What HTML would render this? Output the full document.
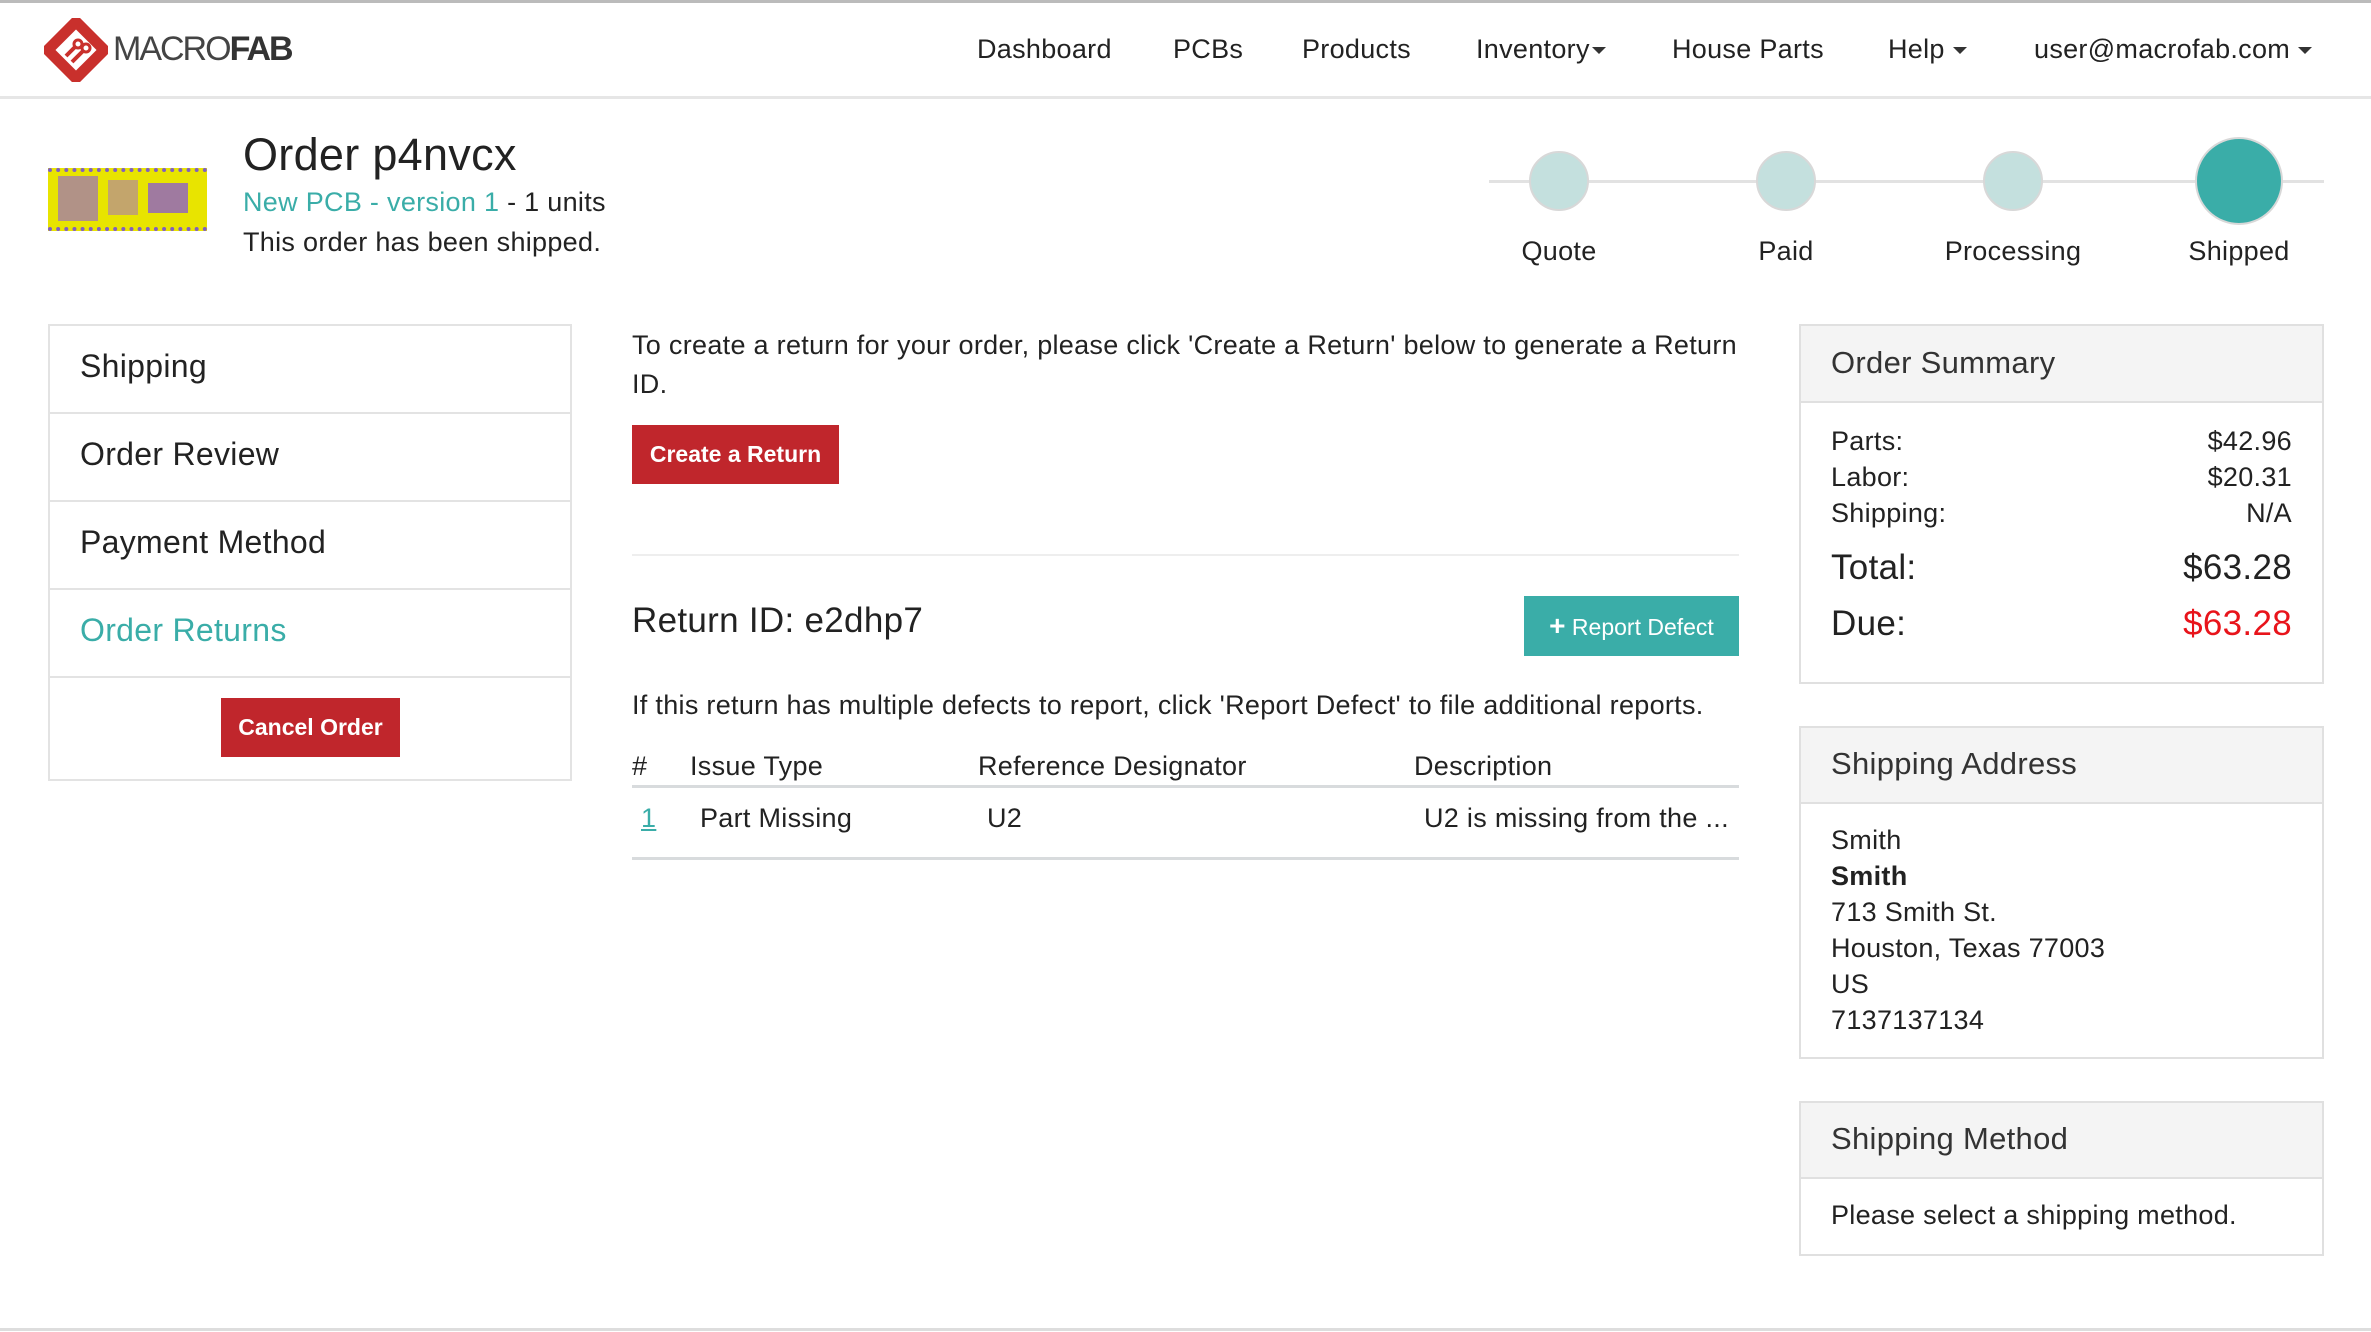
<!DOCTYPE html>
<html><head><meta charset="utf-8">
<style>
*{margin:0;padding:0;box-sizing:border-box}
body{width:2371px;height:1332px;background:#fff;font-family:"Liberation Sans",Arial,sans-serif;color:#222;position:relative;overflow:hidden;letter-spacing:0.3px}
.a{position:absolute;white-space:nowrap}
.nav{position:absolute;left:0;top:0;width:2371px;height:99px;border-top:3px solid #bbb;border-bottom:3px solid #e6e6e6;background:#fff}
.ni{position:absolute;top:31px;font-size:27px;color:#222}
.car{display:inline-block;width:0;height:0;border-left:7px solid transparent;border-right:7px solid transparent;border-top:7px solid #333;vertical-align:middle;margin-left:8px}
.teal{color:#3aada8}
.dot{position:absolute;border-radius:50%;background:#c4e0de;border:2px solid #d8d8d8}
.lbl{position:absolute;top:236px;font-size:27px;width:200px;text-align:center}
.side{position:absolute;left:48px;top:324px;width:524px;height:457px;border:2px solid #e3e3e3}
.si{position:absolute;left:0;width:520px;height:88px;border-bottom:2px solid #e3e3e3;font-size:32px;padding-left:30px;line-height:80px}
.btn{position:absolute;color:#fff;font-weight:bold;font-size:23px;text-align:center;letter-spacing:0}
.red{background:#c0262c}
.panel{position:absolute;left:1799px;width:525px;border:2px solid #e0e0e0}
.ph{background:#f4f4f4;border-bottom:2px solid #e0e0e0;font-size:31px;padding-left:30px;color:#333}
.row{position:absolute;left:30px;right:30px;font-size:27px}
.row span{float:right}
</style></head><body>
<div class="nav">
 <svg class="a" style="left:44px;top:15px" width="64" height="64" viewBox="0 0 64 64">
  <rect x="12" y="12" width="40" height="40" transform="rotate(45 32 32)" fill="none" stroke="#c9302c" stroke-width="11"/>
  <path d="M22 38 L32 28 M28 44 L40 32" stroke="#c9302c" stroke-width="4" fill="none"/>
  <circle cx="34" cy="26" r="4" fill="none" stroke="#c9302c" stroke-width="3"/>
  <circle cx="42" cy="30" r="4" fill="none" stroke="#c9302c" stroke-width="3"/>
 </svg>
 <div class="a" style="left:113px;top:27px;font-size:34px;color:#444;letter-spacing:-2px">MACRO<b style="color:#333">FAB</b></div>
 <div class="ni" style="left:977px">Dashboard</div>
 <div class="ni" style="left:1173px">PCBs</div>
 <div class="ni" style="left:1302px">Products</div>
 <div class="ni" style="left:1476px">Inventory<span class="car" style="margin-left:2px"></span></div>
 <div class="ni" style="left:1672px">House Parts</div>
 <div class="ni" style="left:1888px">Help<span class="car"></span></div>
 <div class="ni" style="left:2034px">user@macrofab.com<span class="car"></span></div>
</div>

<div class="a" style="left:48px;top:168px;width:159px;height:63px;background:#e8e400;overflow:hidden">
 <div style="position:absolute;left:10px;top:8px;width:40px;height:45px;background:#9a6fc0;opacity:.7"></div>
 <div style="position:absolute;left:60px;top:12px;width:30px;height:35px;background:#b48a9a;opacity:.7"></div>
 <div style="position:absolute;left:100px;top:15px;width:40px;height:30px;background:#8c5fc8;opacity:.8"></div>
 <div style="position:absolute;left:0;top:0;width:159px;height:4px;border-top:4px dotted #8060c0"></div>
 <div style="position:absolute;left:0;bottom:0;width:159px;height:4px;border-top:4px dotted #8060c0"></div>
</div>
<div class="a" style="left:243px;top:129px;font-size:45px">Order p4nvcx</div>
<div class="a" style="left:243px;top:187px;font-size:27px"><span class="teal">New PCB - version 1</span> - 1 units</div>
<div class="a" style="left:243px;top:227px;font-size:27px">This order has been shipped.</div>

<div class="a" style="left:1489px;top:180px;width:835px;height:3px;background:#e2e2e2"></div>
<div class="dot" style="left:1529px;top:151px;width:60px;height:60px"></div>
<div class="dot" style="left:1756px;top:151px;width:60px;height:60px"></div>
<div class="dot" style="left:1983px;top:151px;width:60px;height:60px"></div>
<div class="dot" style="left:2195px;top:137px;width:88px;height:88px;background:#3aada8"></div>
<div class="lbl" style="left:1459px">Quote</div>
<div class="lbl" style="left:1686px">Paid</div>
<div class="lbl" style="left:1913px">Processing</div>
<div class="lbl" style="left:2139px">Shipped</div>

<div class="side">
 <div class="si" style="top:0">Shipping</div>
 <div class="si" style="top:88px">Order Review</div>
 <div class="si" style="top:176px">Payment Method</div>
 <div class="si teal" style="top:264px">Order Returns</div>
 <div class="btn red" style="left:171px;top:372px;width:179px;height:59px;line-height:59px">Cancel Order</div>
</div>

<div class="a" style="left:632px;top:326px;font-size:27px;line-height:39px;white-space:normal;width:1125px">To create a return for your order, please click 'Create a Return' below to generate a Return ID.</div>
<div class="btn red" style="left:632px;top:425px;width:207px;height:59px;line-height:59px">Create a Return</div>
<div class="a" style="left:632px;top:554px;width:1107px;height:2px;background:#eee"></div>
<div class="a" style="left:632px;top:601px;font-size:35px">Return ID: e2dhp7</div>
<div class="btn" style="left:1524px;top:596px;width:215px;height:60px;line-height:60px;background:#3aada8;font-weight:normal"><b style="font-size:28px">+</b> Report Defect</div>
<div class="a" style="left:632px;top:690px;font-size:27px">If this return has multiple defects to report, click 'Report Defect' to file additional reports.</div>
<div class="a" style="left:632px;top:751px;font-size:27px">#</div>
<div class="a" style="left:690px;top:751px;font-size:27px">Issue Type</div>
<div class="a" style="left:978px;top:751px;font-size:27px">Reference Designator</div>
<div class="a" style="left:1414px;top:751px;font-size:27px">Description</div>
<div class="a" style="left:632px;top:785px;width:1107px;height:3px;background:#d8dbdd"></div>
<div class="a teal" style="left:641px;top:803px;font-size:27px;text-decoration:underline">1</div>
<div class="a" style="left:700px;top:803px;font-size:27px">Part Missing</div>
<div class="a" style="left:987px;top:803px;font-size:27px">U2</div>
<div class="a" style="left:1424px;top:803px;font-size:27px">U2 is missing from the ...</div>
<div class="a" style="left:632px;top:857px;width:1107px;height:3px;background:#d8dbdd"></div>

<div class="panel" style="top:324px;height:360px">
 <div class="ph" style="height:77px;line-height:73px">Order Summary</div>
 <div class="row" style="top:100px">Parts:<span>$42.96</span></div>
 <div class="row" style="top:136px">Labor:<span>$20.31</span></div>
 <div class="row" style="top:172px">Shipping:<span>N/A</span></div>
 <div class="row" style="top:222px;font-size:35px">Total:<span>$63.28</span></div>
 <div class="row" style="top:278px;font-size:35px">Due:<span style="color:#e8141b">$63.28</span></div>
</div>
<div class="panel" style="top:726px;height:333px">
 <div class="ph" style="height:76px;line-height:72px">Shipping Address</div>
 <div style="padding:18px 0 0 30px;font-size:27px;line-height:36px">Smith<br><b>Smith</b><br>713 Smith St.<br>Houston, Texas 77003<br>US<br>7137137134</div>
</div>
<div class="panel" style="top:1101px;height:155px">
 <div class="ph" style="height:76px;line-height:72px">Shipping Method</div>
 <div style="padding:21px 0 0 30px;font-size:27px">Please select a shipping method.</div>
</div>
<div class="a" style="left:0;top:1328px;width:2371px;height:3px;background:#ddd"></div>
</body></html>
